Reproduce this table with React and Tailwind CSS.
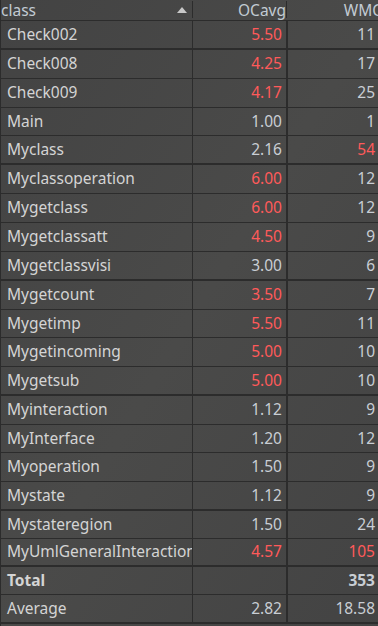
import React from "react";

const rows = [
  ["Check002", "5.50", true, "11", false, 29, 2],
  ["Check008", "4.25", true, "17", false, 29, 1],
  ["Check009", "4.17", true, "25", false, 29, 1],
  ["Main", "1.00", false, "1", false, 28, 1],
  ["Myclass", "2.16", false, "54", true, 29, 2],
  ["Myclassoperation", "6.00", true, "12", false, 29, 1],
  ["Mygetclass", "6.00", true, "12", false, 29, 1],
  ["Mygetclassatt", "4.50", true, "9", false, 29, 1],
  ["Mygetclassvisi", "3.00", false, "6", false, 29, 2],
  ["Mygetcount", "3.50", true, "7", false, 29, 1],
  ["Mygetimp", "5.50", true, "11", false, 28, 1],
  ["Mygetincoming", "5.00", true, "10", false, 29, 1],
  ["Mygetsub", "5.00", true, "10", false, 29, 2],
  ["Myinteraction", "1.12", false, "9", false, 29, 1],
  ["MyInterface", "1.20", false, "12", false, 28, 1],
  ["Myoperation", "1.50", false, "9", false, 29, 1],
  ["Mystate", "1.12", false, "9", false, 29, 2],
  ["Mystateregion", "1.50", false, "24", false, 28, 1],
  ["MyUmlGeneralInteraction", "4.57", true, "105", true, 28, 2],
];

function Row({ name, oc, ocRed, wmc, wmcRed, h, b, bold }) {
  const hc = h === 28 ? "h-[28px]" : "h-[29px]";
  const bc = b === 2 ? "border-b-2" : "border-b";
  return (
    <div className={`flex ${hc} ${bc} border-[#2c2c2c] box-border`}>
      <div className={`w-[192px] shrink-0 border-r border-[#2c2c2c] flex items-center pl-[6px] overflow-hidden whitespace-nowrap text-[#d4d4d4] ${bold ? "font-bold" : ""}`}>
        {name}
      </div>
      <div className={`w-[95px] shrink-0 border-r-2 border-[#2c2c2c] flex items-center justify-end pr-[4px] ${ocRed ? "text-[#ff5a5a]" : "text-[#c9ced4]"}`}>
        {oc}
      </div>
      <div className={`w-[96px] shrink-0 flex items-center justify-end pr-[9px] ${wmcRed ? "text-[#ff5a5a]" : "text-[#c9ced4]"} ${bold ? "font-bold" : ""}`}>
        {wmc}
      </div>
    </div>
  );
}

export default function App() {
  return (
    <div
      className="w-[378px] h-[626px] overflow-hidden bg-[#464646] text-[15.5px] leading-none"
      style={{ fontFamily: '"Noto Sans", "Open Sans", sans-serif' }}
    >
      <div className="w-[383px] border-l border-[#2c2c2c] bg-gradient-to-br from-[#434343] via-[#4a4a49] to-[#434343]">
        <div className="flex h-[21px] border-b border-[#2c2c2c] box-border text-[#c2cbd3] leading-[20px]">
          <div className="w-[192px] shrink-0 flex items-center justify-between pl-[0px] pr-[5px] relative">
            <span className="leading-[20px]">class</span>
            <svg width="10" height="6" viewBox="0 0 10 6" className="mr-[1px]">
              <polygon points="5,0 10,6 0,6" fill="#c8c8c8" />
            </svg>
            <div className="absolute right-0 top-[1px] h-[17px] w-[1px] bg-[#2c2c2c]" />
          </div>
          <div className="w-[95px] shrink-0 flex items-center justify-end pr-[2px] relative">
            <span className="leading-[20px]">OCavg</span>
            <div className="absolute right-[1px] top-[1px] h-[17px] w-[1px] bg-[#2c2c2c]" />
          </div>
          <div className="w-[96px] shrink-0 flex items-center justify-end pr-[2px]">
            <span className="leading-[20px]">WMC</span>
          </div>
        </div>
        {rows.map((r) => (
          <Row key={r[0]} name={r[0]} oc={r[1]} ocRed={r[2]} wmc={r[3]} wmcRed={r[4]} h={r[5]} b={r[6]} />
        ))}
        <Row name="Total" oc="" ocRed={false} wmc="353" wmcRed={false} h={28} b={1} bold />
        <Row name="Average" oc="2.82" ocRed={false} wmc="18.58" wmcRed={false} h={29} b={2} />
        <div className="h-[10px]" />
      </div>
    </div>
  );
}
